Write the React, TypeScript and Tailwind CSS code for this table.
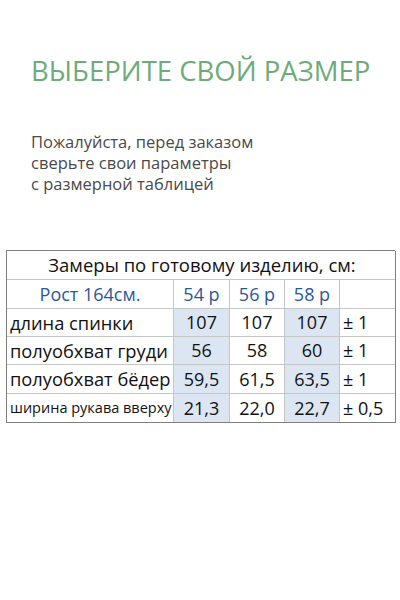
const rows = [
  { name: "длина спинки", v: ["107", "107", "107"], tol: "± 1", small: false },
  { name: "полуобхват груди", v: ["56", "58", "60"], tol: "± 1", small: false },
  { name: "полуобхват бёдер", v: ["59,5", "61,5", "63,5"], tol: "± 1", small: false },
  { name: "ширина рукава вверху", v: ["21,3", "22,0", "22,7"], tol: "± 0,5", small: true },
];

const cell = "border-r border-b border-[#c6c6c6] flex items-center";

export default function App() {
  return (
    <div className="w-[400px] h-[600px] bg-white font-['Open_Sans',sans-serif] overflow-hidden">
      <div className="pt-[52px] pl-[31px]">
        <h1 className="text-[27.5px] leading-[38px] text-[#6eab7a] whitespace-nowrap">
          ВЫБЕРИТЕ СВОЙ РАЗМЕР
        </h1>
        <p className="mt-[41px] text-[16.5px] leading-[21px] text-[#4a4a4a]">
          Пожалуйста, перед заказом
          <br />
          сверьте свои параметры
          <br />с размерной таблицей
        </p>
      </div>

      <div className="mt-[56px] ml-[6px] w-[389px] border-l border-t border-[#7f7f7f]">
        <div className="grid grid-cols-[167px_56px_55px_55px_55px] grid-rows-[29px_29px_28px_28px_29px_28px] text-[#111] border-r border-b border-[#7f7f7f] -mr-px">
          <div className="col-span-5 border-b border-[#c6c6c6] flex items-center justify-center text-[18.5px] pl-[2px]">
            Замеры по готовому изделию, см:
          </div>
          <div className={`${cell} justify-center text-[18px] text-[#2b5797]`}>Рост 164см.</div>
          <div className={`${cell} justify-center text-[18px] text-[#2b5797]`}>54 р</div>
          <div className={`${cell} justify-center text-[18px] text-[#2b5797]`}>56 р</div>
          <div className={`${cell} justify-center text-[18px] text-[#2b5797]`}>58 р</div>
          <div className="border-b border-[#c6c6c6]" />
          {rows.map((r, i) => {
            const last = i === rows.length - 1;
            const b = last ? "border-r border-[#c6c6c6] flex items-center" : cell;
            return (
              <div key={r.name} className="contents">
                <div className={`${b} pl-[3px] whitespace-nowrap ${r.small ? "text-[14.5px]" : "text-[18.3px]"}`}>
                  {r.name}
                </div>
                <div className={`${b} justify-center text-[18px] bg-[#dce6f2]`}>{r.v[0]}</div>
                <div className={`${b} justify-center text-[18px]`}>{r.v[1]}</div>
                <div className={`${b} justify-center text-[18px] bg-[#dce6f2]`}>{r.v[2]}</div>
                <div className={`${last ? "" : "border-b border-[#c6c6c6]"} flex items-center pl-[3px] text-[18px]`}>
                  {r.tol}
                </div>
              </div>
            );
          })}
        </div>
      </div>
    </div>
  );
}
